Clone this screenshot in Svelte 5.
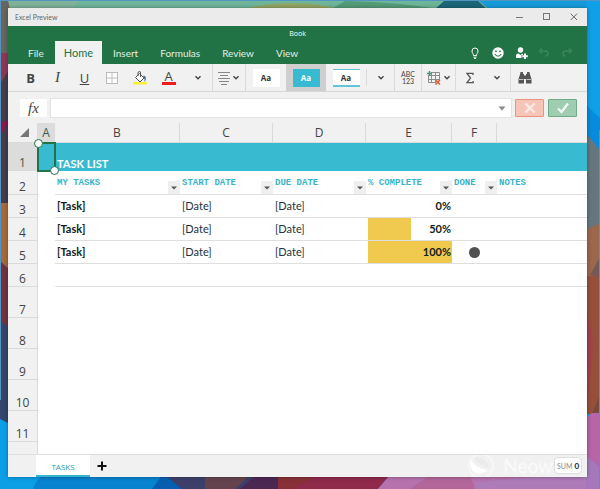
<script>
  const menu = ['File', 'Home', 'Insert', 'Formulas', 'Review', 'View'];
  const columns = ['A', 'B', 'C', 'D', 'E', 'F', ''];
  const fields = ['MY TASKS', 'START DATE', 'DUE DATE', '% COMPLETE', 'DONE', 'NOTES'];
  const tasks = [
    { row: 3, percent: 0, done: false },
    { row: 4, percent: 50, done: false },
    { row: 5, percent: 100, done: true }
  ];
  const emptyRows = [7, 8, 9, 10, 11];
  let active = $state('Home');
  let style = $state(1);
</script>

{#snippet chevron()}
  <svg class="chevron" width="8" height="6" viewBox="0 0 8 6"><path d="M1.500 1.200 4 3.700 6.500 1.200" fill="none" stroke="#444" stroke-width="1.400" /></svg>
{/snippet}

<div class="desktop">
  <svg class="wallpaper" viewBox="0 0 600 489" preserveAspectRatio="none" aria-hidden="true">
    <rect width="600" height="489" fill="#0c9fe6" />
    <path d="M0 0H600V10H0z" fill="#6fb59a" />
    <path d="M0 0H80L70 10H0z" fill="#7eb39a" />
    <path d="M240 10Q290-4 345 10z" fill="#93a763" />
    <path d="M330 10 345 1Q400 2 445 10z" fill="#549c78" />
    <path d="M434 10 444 1H478L488 10z" fill="#1c6678" />
    <path d="M478 0H600V10H490z" fill="#159bd8" />
    <path d="M0 0H8L10 10V60H0z" fill="#66675f" />
    <path d="M0 53H10V72L0 84z" fill="#913657" />
    <path d="M0 84 10 68V204H0z" fill="#463d4c" />
    <path d="M0 122 10 120 0 137z" fill="#8b1750" />
    <path d="M0 203H10V270L0 261z" fill="#a56a3b" />
    <path d="M0 261 10 270V326H0z" fill="#71343f" />
    <path d="M0 321 10 328V424L0 419z" fill="#34466b" />
    <path d="M33 489Q38 475 48 475H200V489z" fill="#0783d0" />
    <path d="M152 489 162 475H200V489z" fill="#075eb0" />
    <path d="M165 475H290V489H182z" fill="#3d3f6a" />
    <path d="M205 475H250L235 489H205z" fill="#65434e" />
    <path d="M240 489 256 475H290V489z" fill="#4b2852" />
    <path d="M278 475H390L378 489H278z" fill="#8f2a4b" />
    <path d="M278 475H318L292 489H278z" fill="#873037" />
    <path d="M390 475H600V489H378z" fill="#b672ad" />
    <path d="M410 489 430 475H470L475 489z" fill="#b3669a" />
    <path d="M475 489V482L560 475H600V489z" fill="#ad7bb8" />
    <path d="M586 0H600V148L586 133z" fill="#0fa0e8" />
    <path d="M586 105 600 118V150L586 134z" fill="#078bdc" />
    <path d="M586 133 600 150V232H586z" fill="#66767d" />
    <path d="M586 230 600 223V280H586z" fill="#9c674a" />
    <path d="M590 275 600 257V277z" fill="#765854" />
    <path d="M586 276H600V414H586z" fill="#96503a" />
    <path d="M586 310 594 340 587 412z" fill="#a04349" />
    <path d="M592 413 600 395V414z" fill="#7b493c" />
    <path d="M586 418 592 413H600V489H586z" fill="#b765a7" />
    <path d="M586 455 600 468V489H586z" fill="#a478ba" />
    <path d="M.5 0V400M0 .5H600M599.5 130V489" fill="none" stroke="#5593c2" />
  </svg>

  <main class="window">
    <header class="titlebar">
      <span>Excel Preview</span>
      <div class="caption">
        <button aria-label="Minimize"><svg width="8" height="8" viewBox="0 0 8 8"><path d="M0 4.5H7" stroke="#777" /></svg></button>
        <button aria-label="Maximize"><svg width="8" height="8" viewBox="0 0 8 8"><rect x=".5" y=".5" width="6" height="6" fill="none" stroke="#777" /></svg></button>
        <button aria-label="Close"><svg width="8" height="8" viewBox="0 0 8 8"><path d="M.7.7 7 7M7 .7.7 7" stroke="#666" /></svg></button>
      </div>
    </header>

    <div class="green">
      <div class="book">Book</div>
      <div class="menurow">
        <nav>
          {#each menu as item}
            <button class="tab" class:active={active === item} onclick={() => (active = item)}>{item}</button>
          {/each}
        </nav>
        <div class="quick">
          <button aria-label="Tell me"><svg width="14" height="14" viewBox="0 0 14 14" fill="none" stroke="#fff"><path d="M5.5 9.5C5.5 7.8 4 7.2 4 5a3 3 0 0 1 6 0C10 7.2 8.500 7.800 8.500 9.500zM5.500 11.200H8.500M6 12.500H8" /></svg></button>
          <button aria-label="Feedback"><svg width="14" height="14" viewBox="0 0 14 14"><circle cx="7" cy="7" r="5.700" fill="#fff" /><circle cx="5" cy="5.300" r=".9" fill="#217346" /><circle cx="9" cy="5.300" r=".9" fill="#217346" /><path d="M3.800 8Q7 12.500 10.200 8" fill="none" stroke="#217346" stroke-width="1.100" /></svg></button>
          <button aria-label="Share"><svg width="14" height="14" viewBox="0 0 14 14" fill="#fff"><circle cx="6.500" cy="4" r="2.700" /><path d="M2 12V9.500Q2 7.500 4.500 7.500L6.500 9 8.300 7.500 9 8V9H7.500V12z" /><path d="M10 7.500H12V9.300H13.800V11.200H12V13H10V11.200H8.200V9.300H10z" /></svg></button>
          <button aria-label="Undo" disabled><svg width="14" height="14" viewBox="0 0 14 14" fill="none" stroke="#3b845c" stroke-width="1.500"><path d="M5 2.500 2.500 5 5 7.500M2.500 5H8.500Q11 5 11 7.500T8.500 10" /></svg></button>
          <button aria-label="Redo" disabled><svg width="14" height="14" viewBox="0 0 14 14" fill="none" stroke="#3b845c" stroke-width="1.500"><path d="M9 2.500 11.500 5 9 7.500M11.500 5H5.500Q3 5 3 7.500T5.500 10" /></svg></button>
        </div>
      </div>
    </div>

    <div class="ribbon">
      <div class="group font">
        <button aria-label="Bold"><b>B</b></button>
        <button class="italic" aria-label="Italic">I</button>
        <button class="underline" aria-label="Underline">U</button>
        <button aria-label="Borders"><svg width="14" height="14" viewBox="0 0 14 14"><rect x="1.500" y="1.500" width="11" height="11" fill="#fff" stroke="#bbb" /><path d="M7 2V12M2 7H12" stroke="#bbb" /></svg></button>
        <button class="wide" aria-label="Fill colour"><svg width="14" height="14" viewBox="0 0 14 14"><path d="M6.500 2.500 11 7 7 11 2.500 6.500z" fill="#fff" stroke="#555" /><path d="M5 5V2Q5 .5 6.500 .5T7.500 2V6" fill="none" stroke="#555" /><path d="M10.300 4.500Q14 5 12.500 9.500L11.500 11Q12 7.500 10.500 6.500z" fill="#4c6e91" /><path d="M0 11H14V13.500H0z" fill="#f7ef36" /></svg></button>
        <button class="wide" aria-label="Font colour"><span class="fontcolor">A</span></button>
        <button class="wide" aria-label="More font options">{@render chevron()}</button>
      </div>
      <button class="group align" aria-label="Alignment">
        <svg width="12" height="14" viewBox="0 0 12 14"><path d="M0 1.500H12M2 4.500H10M0 7.500H12M1 10.500H11M3 13.500H9" stroke="#888" /></svg>
        {@render chevron()}
      </button>
      <div class="styles">
        {#each ['plain', 'solid', 'lined'] as kind, i}
          <button class="style" class:chosen={style === i} onclick={() => (style = i)}><span class={kind}>Aa</span></button>
        {/each}
        <button class="more" aria-label="More styles">{@render chevron()}</button>
      </div>
      <button class="group number" aria-label="Number format"><span>ABC</span><span>123</span></button>
      <button class="group cells" aria-label="Insert and delete cells">
        <svg width="14" height="14" viewBox="0 0 14 14"><path d="M1.500 4V11.500H8M4 1.500H12.500V8M4.500 1V12M8.500 1V12M1 4.500H13M1 8.500H13" fill="none" stroke="#8d8d8d" /><path d="M2.500 0V5M0 2.500H5" stroke="#3d9b70" stroke-width="1.500" /><path d="M8.500 9 13 13.500M13 9 8.500 13.500" stroke="#e05a35" stroke-width="1.500" /></svg>
        {@render chevron()}
      </button>
      <div class="group sum">
        <button aria-label="AutoSum"><svg width="10" height="12" viewBox="0 0 10 12"><path d="M8 3V1.300H2L5.500 6 2 10.700H8.200V9" fill="none" stroke="#555" stroke-width="1.300" /></svg></button>
        <button aria-label="More functions">{@render chevron()}</button>
      </div>
      <button class="find" aria-label="Find"><svg width="14" height="14" viewBox="0 0 14 14" fill="#555"><path d="M2.500 1H5V3H6V12.500H.5V8L2 3.500zM11.500 1H9V3H8V12.500H13.500V8L12 3.500zM6 4.500H8V8H6z" /><path d="M1 8.500H5.500M8.500 8.500H13" stroke="#f1f1f1" stroke-width=".7" /></svg></button>
    </div>

    <div class="formula">
      <button class="fx" aria-label="Insert function"><i>fx</i></button>
      <div class="entry">
        <input type="text" aria-label="Formula" />
        <button aria-label="Expand formula bar"><svg width="8" height="5" viewBox="0 0 8 5"><path d="M.5.500H7.500L4 4.500z" fill="#888" /></svg></button>
      </div>
      <button class="cancel" aria-label="Cancel"><svg width="12" height="12" viewBox="0 0 12 12"><path d="M1.500 1.500 10.500 10.500M10.500 1.500 1.500 10.500" stroke="#fbe9e4" stroke-width="2.400" /></svg></button>
      <button class="accept" aria-label="Enter"><svg width="12" height="12" viewBox="0 0 12 12"><path d="M1 6.500 4.500 10 11 1.500" fill="none" stroke="#eef7f1" stroke-width="2.400" /></svg></button>
    </div>

    <div class="sheet">
      <table>
        <colgroup><col class="h" /><col class="a" /><col class="b" /><col class="c" /><col class="c" /><col class="e" /><col class="f" /><col /></colgroup>
        <thead>
          <tr>
            <th class="corner"><svg width="10" height="9" viewBox="0 0 10 9"><path d="M9 0V9H0z" fill="#777" /></svg></th>
            {#each columns as name}<th class="letter" class:selected={name === 'A'}>{name}</th>{/each}
          </tr>
        </thead>
        <tbody>
          <tr class="banner">
            <th class="selected">1</th>
            <td class="picked"><span class="handles"></span></td>
            <td colspan="6">TASK LIST</td>
          </tr>
          <tr class="fields">
            <th>2</th>
            <td class="blank"></td>
            {#each fields as field, i}
              <td>
                <div class="field">
                  <span>{field}</span>
                  {#if i < 5}<button aria-label="Filter {field}"><svg width="6" height="4" viewBox="0 0 6 4"><path d="M0 .5H6L3 3.500z" fill="#555" /></svg></button>{/if}
                </div>
              </td>
            {/each}
          </tr>
          {#each tasks as task}
            <tr>
              <th>{task.row}</th>
              <td class="blank"></td>
              <td class="strong">[Task]</td>
              <td>[Date]</td>
              <td>[Date]</td>
              <td class="strong percent" style="--done: {task.percent}%">{task.percent}%</td>
              <td class="mark">{#if task.done}<span class="dot"></span>{/if}</td>
              <td></td>
            </tr>
          {/each}
          <tr><th>6</th><td class="blank"></td><td colspan="6"></td></tr>
          {#each emptyRows as n}
            <tr class="tall"><th>{n}</th><td class="blank" colspan="7"></td></tr>
          {/each}
        </tbody>
      </table>
      <div class="rest"></div>
    </div>

    <footer>
      <button class="sheettab">TASKS</button>
      <button class="add" aria-label="Add sheet"><svg width="10" height="10" viewBox="0 0 10 10"><path d="M5 .5V9.500M.5 5H9.500" stroke="#111" stroke-width="2" /></svg></button>
      <div class="brand">
        <svg width="30" height="22" viewBox="0 0 30 22"><circle cx="15" cy="11" r="12" fill="none" stroke="#f7f7f7" stroke-width="2" /><path d="M8 3Q18 0 24 13 13 11 8 3z" fill="#ebebeb" /><path d="M5 5Q9 13 21 15 13 22 7 16 3 11 5 5z" fill="#fff" /></svg>
        <span>Neow</span>
      </div>
      <div class="total"><span>SUM</span><b>0</b></div>
    </footer>
  </main>
</div>

<style>
  :global(body) { margin: 0; }
  .desktop {
    position: relative;
    box-sizing: border-box;
    display: flex;
    min-height: 100vh;
    padding: 8px 13px 12px 8px;
    font: 11px/14px Lato, "Open Sans", sans-serif;
    color: #444;
  }
  .wallpaper { position: absolute; inset: 0; width: 100%; height: 100%; }
  button {
    display: flex;
    align-items: center;
    justify-content: center;
    padding: 0;
    border: 0;
    background: none;
    font: inherit;
    color: inherit;
  }
  svg { display: block; flex: none; }
  .window {
    position: relative;
    flex: 1;
    min-width: 0;
    display: flex;
    flex-direction: column;
    background: #f1f1f1;
    box-shadow: 0 0 4px rgba(0, 0, 0, 0.35);
  }
  .titlebar {
    display: flex;
    justify-content: space-between;
    height: 18px;
    padding-left: 7px;
    background: #ebebeb;
    font-size: 7px;
    line-height: 18px;
    color: #666;
  }
  .caption { display: flex; }
  .caption button { width: 27px; }
  .green { background: #217346; color: #fff; }
  .book { height: 15px; font: 7px/16px "Open Sans", sans-serif; text-align: center; }
  .menurow { display: flex; justify-content: space-between; height: 23px; }
  nav { display: flex; padding-left: 9px; font-size: 10px; }
  .tab { padding: 0 11px; color: #e2efe8; }
  .tab.active { padding: 0 9px; background: #f1f1f1; font-size: 11px; color: #217346; }
  .quick { display: flex; gap: 9px; padding-right: 13px; }

  .ribbon { display: flex; height: 27px; border-bottom: 1px solid #d6d6d6; }
  .group { border-right: 1px solid #dadada; }
  .font { display: flex; padding-left: 9px; }
  .font button { width: 27px; font: 13px "Open Sans", sans-serif; }
  .font .italic { font: italic 15px "Liberation Serif", serif; }
  .font .underline { text-decoration: underline; }
  .font .wide { width: 29px; }
  .fontcolor { width: 14px; height: 11px; line-height: 11px; border-bottom: 3px solid #ee1c1c; }
  .align { gap: 2px; width: 33px; }
  .styles { display: flex; border-right: 1px solid #dadada; }
  .style { width: 40px; font: 700 8px "Open Sans", sans-serif; color: #333; }
  .style.chosen { background: #cfcfcf; }
  .style span { box-sizing: border-box; width: 27px; height: 18px; line-height: 18px; background: #fff; }
  .style .solid { background: #38bad1; color: #fff; }
  .style .lined { border: solid #62c6d8; border-width: 1px 0 2px; line-height: 16px; }
  .more { width: 28px; margin: 5px 0; border-left: 1px solid #dadada; }
  .number { flex-direction: column; width: 27px; font-size: 7px; line-height: 7px; }
  .cells { gap: 2px; width: 34px; }
  .sum { display: flex; }
  .sum button { width: 27px; }
  .find { width: 28px; }

  .formula { display: flex; gap: 4px; padding: 7px 10px 6px 12px; }
  .formula button, .entry { height: 18px; }
  .fx { width: 27px; background: #fff; }
  .fx i { font: italic 15px/18px "Liberation Serif", serif; }
  .entry { flex: 1; display: flex; min-width: 0; background: #fff; outline: 1px solid #e3e3e3; }
  .entry input { flex: 1; min-width: 0; padding: 0 4px; border: 0; outline: 0; background: none; font: inherit; }
  .entry button { width: 19px; }
  .formula .cancel, .formula .accept { box-sizing: border-box; width: 29px; border: 1px solid #e9927e; border-radius: 1px; background: #f7c4b8; }
  .formula .accept { border-color: #6fa986; background: #9fcdb1; }

  .sheet { flex: 1; display: flex; flex-direction: column; background: #fff; }
  table { width: 100%; table-layout: fixed; border-collapse: separate; border-spacing: 0; }
  .h { width: 30px; }
  .a { width: 17px; }
  .b { width: 125px; }
  .c { width: 93px; }
  .e { width: 86px; }
  .f { width: 45px; }
  th, td { box-sizing: border-box; height: 23px; padding: 0; }
  th {
    border: solid #dadada;
    border-width: 0 1px 1px 0;
    background: #f1f1f1;
    font: 400 12px/14px "Open Sans", sans-serif;
    vertical-align: bottom;
  }
  thead th { height: 20px; vertical-align: middle; }
  thead th:last-child { border-right: 0; }
  .corner svg { margin-left: 12px; }
  th.selected { background: #dcdcdc; color: #3d5b4b; }
  td { padding-left: 2px; border-bottom: 1px solid #dedede; color: #26323a; }
  td.blank { border-bottom: 0; }
  .strong { font-weight: 700; color: #111c22; }
  .banner th, .banner td { height: 28px; }
  .banner td { border: 0; background: #38bad1; color: #fff; font-weight: 700; vertical-align: bottom; }
  .banner .picked { position: relative; outline: 2px solid #217346; outline-offset: -1px; }
  .handles::before, .handles::after {
    content: "";
    position: absolute;
    z-index: 1;
    width: 7px;
    height: 7px;
    border: 1px solid #217346;
    border-radius: 50%;
    background: #fff;
  }
  .handles::before { top: -4px; left: -4px; }
  .handles::after { right: -4px; bottom: -4px; }
  .fields th, .fields td { height: 24px; }
  .field { display: flex; justify-content: space-between; height: 23px; font: 700 9px/24px "Liberation Mono", monospace; color: #38b3cb; white-space: nowrap; }
  .field button { align-self: flex-end; width: 12px; height: 13px; background: #efefef; }
  .percent {
    padding-right: 1px;
    text-align: right;
    background: linear-gradient(#f0c94f, #f0c94f) no-repeat 2px 0 / var(--done) 100%;
    background-clip: padding-box;
  }
  .mark { padding: 0; }
  .dot { display: block; width: 11px; height: 11px; margin: 0 auto; border-radius: 50%; background: #505050; }
  .tall th, .tall td { height: 31px; }
  .rest { flex: 1; width: 29px; border-right: 1px solid #dadada; background: #f1f1f1; }

  footer { display: flex; height: 23px; border-top: 1px solid #dedede; box-sizing: border-box; padding-right: 5px; }
  .sheettab { width: 54px; margin-left: 28px; padding-top: 2px; border-bottom: 2px solid #38b3cb; background: #fff; font: 8px "Open Sans", sans-serif; color: #259db5; }
  .add { width: 23px; }
  .brand { display: flex; align-items: center; gap: 7px; margin: 0 1px 0 auto; font-size: 19px; color: #fafafa; }
  .total { box-sizing: border-box; display: flex; align-items: center; justify-content: center; gap: 2px; width: 28px; height: 17px; margin-top: 2px; border: 1px solid #ddd; border-radius: 4px; background: #fff; font-size: 7px; color: #888; }
  .total b { font-size: 8px; color: #222; }
</style>
